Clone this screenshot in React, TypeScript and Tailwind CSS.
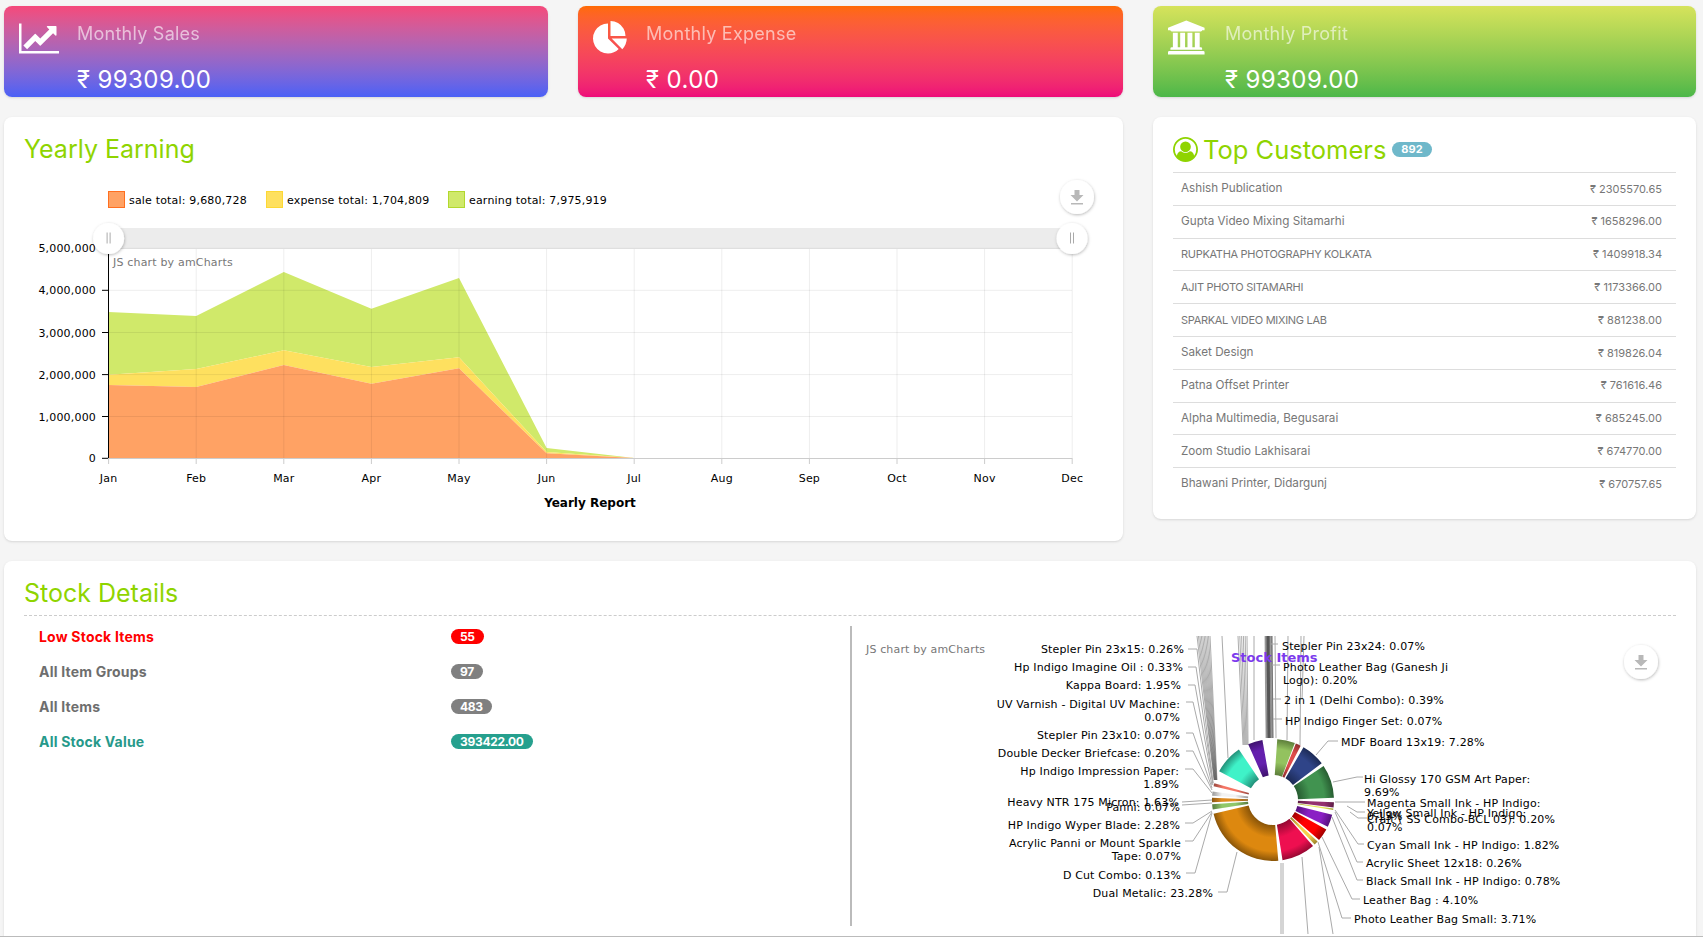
import type { ReactNode } from "react";

const customers = [
  ["Ashish Publication", "2305570.65"],
  ["Gupta Video Mixing Sitamarhi", "1658296.00"],
  ["RUPKATHA PHOTOGRAPHY KOLKATA", "1409918.34"],
  ["AJIT PHOTO SITAMARHI", "1173366.00"],
  ["SPARKAL VIDEO MIXING LAB", "881238.00"],
  ["Saket Design", "819826.04"],
  ["Patna Offset Printer", "761616.46"],
  ["Alpha Multimedia, Begusarai", "685245.00"],
  ["Zoom Studio Lakhisarai", "674770.00"],
  ["Bhawani Printer, Didargunj", "670757.65"],
];

const LineChartIcon = () => (
  <svg viewBox="0 0 2048 1792" className="w-[40px] h-[35px] mt-[15px] shrink-0" fill="#fff">
    <path d="M2048 1536v128h-2048v-1536h128v1408h1920zm-128-1248v435q0 21-19.5 29.5t-35.5-7.5l-121-121-633 633q-10 10-23 10t-23-10l-233-233-416 416-192-192 585-585q10-10 23-10t23 10l233 233 464-464-121-121q-16-16-7.5-35.5t29.5-19.5h435q14 0 23 9t9 23z" />
  </svg>
);

const PieIcon = () => (
  <svg viewBox="0 0 1792 1792" className="w-[35px] h-[35px] mt-[15px] shrink-0" fill="#fff">
    <path d="M768 890l546 546q-106 108-247.5 168t-298.5 60q-209 0-385.5-103t-279.5-279.5-103-385.5 103-385.5 279.5-279.5 385.5-103v762zm187 6h773q0 157-60 298.5t-168 247.5zm709-128h-768v-768q209 0 385.5 103t279.5 279.5 103 385.5z" />
  </svg>
);

const BankIcon = () => (
  <svg viewBox="0 0 2048 1792" className="w-[39px] h-[35px] mt-[14px] shrink-0" fill="#fff">
    <path d="M960 0l960 384v128h-128q0 26-20.5 45t-48.5 19h-1526q-28 0-48.5-19t-20.5-45h-128v-128zm-704 640h256v768h128v-768h256v768h128v-768h256v768h128v-768h256v768h59q28 0 48.5 19t20.5 45v64h-1664v-64q0-26 20.5-45t48.5-19h59v-768zm1595 960q28 0 48.5 19t20.5 45v128h-1920v-128q0-26 20.5-45t48.5-19h1782z" />
  </svg>
);

const UserIcon = () => (
  <svg viewBox="0 0 1792 1792" className="w-[25px] h-[25px] shrink-0" fill="#8fd400">
    <path d="M896 0q182 0 348 71t286 191 191 286 71 348q0 181-70.5 347t-190.5 286-286 191.5-349 71.5-349-71-285.5-191.5-190.5-286-71-347.5 71-348 191-286 286-191 348-71zm619 1351q149-205 149-455 0-156-61-298t-164-245-245-164-298-61-298 61-245 164-164 245-61 298q0 250 149 455 66-327 306-327 131 128 313 128t313-128q240 0 306 327zm-235-647q0-159-112.5-271.5t-271.5-112.5-271.5 112.5-112.5 271.5 112.5 271.5 271.5 112.5 271.5-112.5 112.5-271.5z" />
  </svg>
);

type StatProps = {
  readonly title: string;
  readonly value: string;
  readonly icon: ReactNode;
  readonly gradient: string;
};

const StatCard = ({ title, value, icon, gradient }: StatProps) => (
  <div className={`h-[91px] rounded-lg flex gap-[18px] pl-[15px] shadow-sm ${gradient}`}>
    {icon}
    <div className="text-white">
      <div className="text-[18px] leading-[27px] mt-[14px] opacity-60 tracking-[0.25px]">{title}</div>
      <div className="text-[24px] leading-[36px] mt-[15px] tracking-[0.4px]">₹ {value}</div>
    </div>
  </div>
);

const Title = ({ children }: { readonly children: ReactNode }) => (
  <h2 className="text-[25px] leading-[36px] text-[#8fd400]">{children}</h2>
);

const Handle = ({ cx, cy }: { readonly cx: number; readonly cy: number }) => (
  <g>
    <circle cx={cx} cy={cy} r={15.5} fill="#fff" filter="url(#soft)" />
    <path d={`M${cx - 1.5} ${cy - 6}v11M${cx + 1.5} ${cy - 6}v11`} stroke="#aaa" />
  </g>
);

const ExportButton = ({ cx, cy }: { readonly cx: number; readonly cy: number }) => (
  <g>
    <circle cx={cx} cy={cy} r={17} fill="#fff" filter="url(#soft)" />
    <path
      d={`M${cx - 2.5} ${cy - 7}h5v5h4l-6.500 6.500-6.500-6.500h4zM${cx - 6} ${cy + 6}h12v1.500h-12z`}
      fill="#b8b8b8"
    />
  </g>
);

const SoftShadow = () => (
  <defs>
    <filter id="soft" x="-30%" y="-30%" width="160%" height="170%">
      <feDropShadow dx="0.5" dy="1" stdDeviation="1.5" floodColor="#000" floodOpacity="0.28" />
    </filter>
  </defs>
);

const months = ["Jan", "Feb", "Mar", "Apr", "May", "Jun", "Jul", "Aug", "Sep", "Oct", "Nov", "Dec"];
const monthX = (i: number) => 108.6 + i * 87.6;

const earningTop = [312, 316, 272, 308.7, 278, 448, 458];
const expenseTop = [374.7, 369, 350.3, 367, 357.3, 452, 458];
const saleTop = [385, 387, 365, 383.7, 368.3, 453.3, 458];

const band = (upper: number[], lower: number[] | null) => {
  const top = upper.map((y, i) => `${monthX(i)},${y}`);
  const bottom = lower
    ? lower.map((y, i) => `${monthX(i)},${y}`).reverse()
    : [`${monthX(6)},458.300`, `${monthX(0)},458.300`];
  return [...top, ...bottom].join(" ");
};

const legend = [
  { x: 108, fill: "#ffa264", border: "#ff6f20", label: "sale total: 9,680,728" },
  { x: 266, fill: "#fee05f", border: "#fdd835", label: "expense total: 1,704,809" },
  { x: 448, fill: "#d0e96a", border: "#b2d82e", label: "earning total: 7,975,919" },
];

const yTicks = [
  { label: "5,000,000", y: 248.3 },
  { label: "4,000,000", y: 290.3 },
  { label: "3,000,000", y: 332.5 },
  { label: "2,000,000", y: 374.6 },
  { label: "1,000,000", y: 416.5 },
  { label: "0", y: 458.3 },
];

const YearlyChart = () => (
  <svg viewBox="4 166 1119 375" className="block w-[1119px] h-[375px]" fontFamily="'DejaVu Sans', sans-serif" fontSize={11} letterSpacing={0.18}>
    <SoftShadow />
    {legend.map((l) => (
      <g key={l.label}>
        <rect x={l.x + 0.5} y={191.5} width={16} height={16} fill={l.fill} stroke={l.border} />
        <text x={l.x + 21} y={200} dominantBaseline="central">{l.label}</text>
      </g>
    ))}
    <rect x={108} y={228} width={964} height={21} fill="#ececec" />
    <polygon points={band(earningTop, expenseTop)} fill="#d0e96a" />
    <polygon points={band(expenseTop, saleTop)} fill="#fee05f" />
    <polygon points={band(saleTop, null)} fill="#ffa264" />
    {yTicks.slice(0, 5).map((t) => (
      <line key={t.y} x1={108} y1={t.y} x2={1072} y2={t.y} stroke="#000" strokeOpacity={0.07} />
    ))}
    {months.map((m, i) => (
      <line key={m} x1={monthX(i)} y1={249} x2={monthX(i)} y2={458} stroke="#000" strokeOpacity={0.07} />
    ))}
    <line x1={108.5} y1={249} x2={108.5} y2={458} stroke="#000" />
    <line x1={108} y1={458.500} x2={1072} y2={458.500} stroke="#ccc" />
    {yTicks.map((t) => (
      <g key={t.label}>
        <line x1={102} y1={t.y} x2={108} y2={t.y} stroke="#000" />
        <text x={96} y={t.y + 0.5} textAnchor="end" dominantBaseline="central">{t.label}</text>
      </g>
    ))}
    {months.map((m, i) => (
      <g key={m}>
        <line x1={monthX(i)} y1={458} x2={monthX(i)} y2={464} stroke="#ccc" />
        <text x={monthX(i)} y={478} textAnchor="middle" dominantBaseline="central">{m}</text>
      </g>
    ))}
    <text x={590} y={503} textAnchor="middle" dominantBaseline="central" fontWeight="bold" fontSize={12} letterSpacing={0}>Yearly Report</text>
    <text x={113} y={262} dominantBaseline="central" fill="#777">JS chart by amCharts</text>
    <Handle cx={108.6} cy={238.5} />
    <Handle cx={1072} cy={238.5} />
    <ExportButton cx={1077} cy={197} />
  </svg>
);

const stockRows = [
  { label: "Low Stock Items", value: "55", text: "text-[#ff0000]", badge: "bg-[#ff0000]" },
  { label: "All Item Groups", value: "97", text: "text-[#6e6e6e]", badge: "bg-[#808080]" },
  { label: "All Items", value: "483", text: "text-[#6e6e6e]", badge: "bg-[#808080]" },
  { label: "All Stock Value", value: "393422.00", text: "text-[#26998a]", badge: "bg-[#26a08e]" },
];

const cx0 = 1273;
const cy0 = 800;

const arc = (a0: number, a1: number, rIn: number, rOut: number) => {
  const pt = (a: number, r: number) => {
    const t = (a * Math.PI) / 180;
    return `${(cx0 + r * Math.sin(t)).toFixed(2)} ${(cy0 - r * Math.cos(t)).toFixed(2)}`;
  };
  const large = a1 - a0 > 180 ? 1 : 0;
  return `M${pt(a0, rIn)}L${pt(a0, rOut)}A${rOut} ${rOut} 0 ${large} 1 ${pt(a1, rOut)}L${pt(a1, rIn)}A${rIn} ${rIn} 0 ${large} 0 ${pt(a0, rIn)}Z`;
};

const slices = [
  { a: 4, b: 21, c: "#93c25f", d: "#5c7d3a" },
  { a: 22, b: 27, c: "#dd4b4b", d: "#8e2f2f" },
  { a: 30, b: 53, c: "#2f4488", d: "#1c2a55" },
  { a: 56, b: 88, c: "#419350", d: "#275c31" },
  { a: 92, b: 97, c: "#94306f", d: "#5e1e46" },
  { a: 98, b: 99.500, c: "#e8e85a", d: "#a0a03a" },
  { a: 104, b: 116, c: "#8a1fc4", d: "#56127c" },
  { a: 119, b: 131, c: "#ff0000", d: "#a00000" },
  { a: 133, b: 137, c: "#f5d04a", d: "#9c842c" },
  { a: 139, b: 171, c: "#ee0f50", d: "#960832" },
  { a: 175, b: 257, c: "#dd880f", d: "#8a5508" },
  { a: 261, b: 266, c: "#90c76a", d: "#5a7d42" },
  { a: 268, b: 272, c: "#dd8a20", d: "#8a5612" },
  { a: 274, b: 278, c: "#f2f2f2", d: "#999999" },
  { a: 283, b: 286, c: "#f57565", d: "#99493f" },
  { a: 298, b: 326, c: "#3ff2c8", d: "#23917a" },
  { a: 336, b: 350, c: "#6420ad", d: "#3f136e" },
];

const leftLabels: { r: number; y: number; t: string }[] = [
  { r: 1184, y: 649, t: "Stepler Pin 23x15: 0.26%" },
  { r: 1183, y: 667, t: "Hp Indigo Imagine Oil : 0.33%" },
  { r: 1181, y: 685, t: "Kappa Board: 1.95%" },
  { r: 1180, y: 704, t: "UV Varnish - Digital UV Machine:" },
  { r: 1180, y: 717, t: "0.07%" },
  { r: 1180, y: 735, t: "Stepler Pin 23x10: 0.07%" },
  { r: 1180, y: 753, t: "Double Decker Briefcase: 0.20%" },
  { r: 1179, y: 771, t: "Hp Indigo Impression Paper:" },
  { r: 1179, y: 784, t: "1.89%" },
  { r: 1179, y: 802, t: "Heavy NTR 175 Micron: 1.63%" },
  { r: 1180, y: 807, t: "Panni: 0.07%" },
  { r: 1180, y: 825, t: "HP Indigo Wyper Blade: 2.28%" },
  { r: 1181, y: 843, t: "Acrylic Panni or Mount Sparkle" },
  { r: 1181, y: 856, t: "Tape: 0.07%" },
  { r: 1181, y: 875, t: "D Cut Combo: 0.13%" },
  { r: 1213, y: 893, t: "Dual Metalic: 23.28%" },
];

const rightLabels: { x: number; y: number; t: string }[] = [
  { x: 1282, y: 646, t: "Stepler Pin 23x24: 0.07%" },
  { x: 1283, y: 667, t: "Photo Leather Bag (Ganesh Ji" },
  { x: 1283, y: 680, t: "Logo): 0.20%" },
  { x: 1284, y: 700, t: "2 in 1 (Delhi Combo): 0.39%" },
  { x: 1285, y: 721, t: "HP Indigo Finger Set: 0.07%" },
  { x: 1341, y: 742, t: "MDF Board 13x19: 7.28%" },
  { x: 1364, y: 779, t: "Hi Glossy 170 GSM Art Paper:" },
  { x: 1364, y: 792, t: "9.69%" },
  { x: 1367, y: 803, t: "Magenta Small Ink - HP Indigo:" },
  { x: 1367, y: 816, t: "0.13%" },
  { x: 1367, y: 813, t: "Yellow Small Ink - HP Indigo:" },
  { x: 1367, y: 827, t: "0.07%" },
  { x: 1367, y: 819, t: "Craft ( SS Combo-BCL 03): 0.20%" },
  { x: 1367, y: 845, t: "Cyan Small Ink - HP Indigo: 1.82%" },
  { x: 1366, y: 863, t: "Acrylic Sheet 12x18: 0.26%" },
  { x: 1366, y: 881, t: "Black Small Ink - HP Indigo: 0.78%" },
  { x: 1363, y: 900, t: "Leather Bag : 4.10%" },
  { x: 1354, y: 919, t: "Photo Leather Bag Small: 3.71%" },
];

const leaders = [
  "M1188 649H1197L1213 783",
  "M1188 667H1196L1213 783",
  "M1188 685H1195L1213 785",
  "M1186 702H1193L1212 785",
  "M1186 733H1193L1212 788",
  "M1186 751H1193L1212 790",
  "M1185 769H1193L1212 793",
  "M1182 802L1212 800",
  "M1182 805L1212 803",
  "M1185 823H1193L1212 811",
  "M1185 841H1193L1212 812",
  "M1186 873H1195L1212 813",
  "M1218 892H1227L1237 852",
  "M1278 644H1271",
  "M1280 665H1272",
  "M1281 699H1273",
  "M1282 719H1273",
  "M1316 755L1328 741H1338",
  "M1333 782L1357 777H1363",
  "M1335 802H1365",
  "M1347 806L1357 812H1365",
  "M1350 812L1358 818H1367",
  "M1335 810L1358 844H1364",
  "M1335 812L1357 862H1363",
  "M1332 817L1357 880H1363",
  "M1322 837L1352 899H1360",
  "M1318 842L1342 918H1351",
  "M1302 857L1308 934",
  "M1319 847L1333 934",
  "M1281 863V934",
  "M1283 863V934",
  "M1222 636L1228 758",
  "M1254 636V740",
  "M1288 636L1287 740",
  "M1301 636L1300 745",
  "M1304 636L1302 700",
];

// the fans of thin leaders running off the top of the chart
const fan = (x0: number, x1: number, xb0: number, xb1: number, yb: number, n: number) =>
  Array.from({ length: n }, (_, i) => {
    const f = n > 1 ? i / (n - 1) : 0;
    return `M${x0 + (x1 - x0) * f} 636L${xb0 + (xb1 - xb0) * f} ${yb}`;
  });

const fans = [
  ...fan(1197, 1210, 1214, 1217, 780, 10),
  ...fan(1238, 1247, 1243, 1248, 745, 6),
  ...fan(1265, 1272, 1266, 1273, 738, 12),
  ...fan(1272, 1275, 1273, 1276, 738, 2),
];

const StockChart = () => (
  <svg viewBox="852 626 844 310" className="block w-[844px] h-[310px] shrink-0 mt-[10px]" fontFamily="'DejaVu Sans', sans-serif" fontSize={11} letterSpacing={0.15}>
    <SoftShadow />
    <defs>
      {slices.map((s, i) => (
        <radialGradient key={i} id={`slice${i}`} gradientUnits="userSpaceOnUse" cx={cx0} cy={cy0} r={61}>
          <stop offset="0.41" stopColor={s.d} />
          <stop offset="0.62" stopColor={s.c} />
          <stop offset="0.84" stopColor={s.c} />
          <stop offset="1" stopColor={s.d} />
        </radialGradient>
      ))}
    </defs>
    <text x={866} y={649} dominantBaseline="central" fill="#777">JS chart by amCharts</text>
    {fans.map((d, i) => (
      <path key={i} d={d} fill="none" stroke="#333" strokeOpacity={0.4} />
    ))}
    <path d="M1268 636L1269 738" fill="none" stroke="#555" strokeWidth={3} />
    {leaders.map((d, i) => (
      <path key={i} d={d} fill="none" stroke="#aaa" />
    ))}
    {slices.map((s, i) => (
      <path key={i} d={arc(s.a, s.b, 25, 61)} fill={`url(#slice${i})`} />
    ))}
    <text x={1231} y={657} dominantBaseline="central" fontWeight="bold" fontSize={13} fill="#7c3aed" letterSpacing={0}>Stock Items</text>
    {leftLabels.map((l) => (
      <text key={l.t} x={l.r} y={l.y} textAnchor="end" dominantBaseline="central">{l.t}</text>
    ))}
    {rightLabels.map((l) => (
      <text key={l.t} x={l.x} y={l.y} dominantBaseline="central">{l.t}</text>
    ))}
    <ExportButton cx={1641} cy={662} />
  </svg>
);

export default function App() {
  return (
    <div className="h-[937px] overflow-hidden bg-[#f5f5f5] font-['Inter',sans-serif] border-b border-[#bbb]">
      <div className="grid grid-cols-[544px_545px_543px] gap-x-[30px] pl-[4px] pt-[6px]">
        <StatCard title="Monthly Sales" value="99309.00" icon={<LineChartIcon />} gradient="bg-gradient-to-b from-[#f5487a] to-[#4a60f6]" />
        <StatCard title="Monthly Expense" value="0.00" icon={<PieIcon />} gradient="bg-gradient-to-b from-[#ff6a00] to-[#ee0979]" />
        <StatCard title="Monthly Profit" value="99309.00" icon={<BankIcon />} gradient="bg-gradient-to-b from-[#d6e35b] to-[#4bb749]" />

        <div className="col-span-2 mt-[20px] h-[424px] bg-white rounded-lg shadow-sm">
          <div className="h-[49px] pl-[20px] pt-[14px]">
            <Title>Yearly Earning</Title>
          </div>
          <YearlyChart />
        </div>

        <div className="mt-[20px] h-[402px] bg-white rounded-lg shadow-sm px-[20px]">
          <div className="h-[55px] flex items-center gap-[5px] pt-[10px]">
            <UserIcon />
            <span className="text-[25.5px] leading-[36px] text-[#8fd400]">Top Customers</span>
            <span className="ml-[1px] h-[15px] px-[9px] rounded-full bg-[#6fb8ca] text-white text-[11px] font-bold leading-[15px]">892</span>
          </div>
          <div className="text-[#777]">
            {customers.map(([name, amount]) => (
              <div key={name} className="h-[32.8px] flex items-center justify-between pl-[8px] pr-[14px] border-t border-[#ddd]">
                <span className={name === name.toUpperCase() ? "text-[11px] tracking-[-0.3px]" : "text-[11.7px]"}>{name}</span>
                <span className="text-[11px]">₹ {amount}</span>
              </div>
            ))}
          </div>
        </div>

        <div className="col-span-3 mt-[20px] h-[375px] bg-white rounded-t-lg shadow-sm px-[20px] overflow-hidden">
          <div className="pt-[14px] pb-[4px] border-b border-dashed border-[#ccc]">
            <Title>Stock Details</Title>
          </div>
          <div className="flex">
            <div className="w-[826px] pl-[15px] pt-[3px] shrink-0">
              {stockRows.map((r) => (
                <div key={r.label} className="h-[35px] flex items-center">
                  <span className={`w-[412px] text-[14px] font-bold tracking-[0.2px] ${r.text}`}>{r.label}</span>
                  <span className={`h-[15px] px-[9px] rounded-full text-white text-[12px] font-bold leading-[15px] tracking-[-0.3px] ${r.badge}`}>{r.value}</span>
                </div>
              ))}
            </div>
            <div className="w-[2px] h-[300px] mt-[10px] bg-[#bbb] shrink-0" />
            <StockChart />
          </div>
        </div>
      </div>
    </div>
  );
}
